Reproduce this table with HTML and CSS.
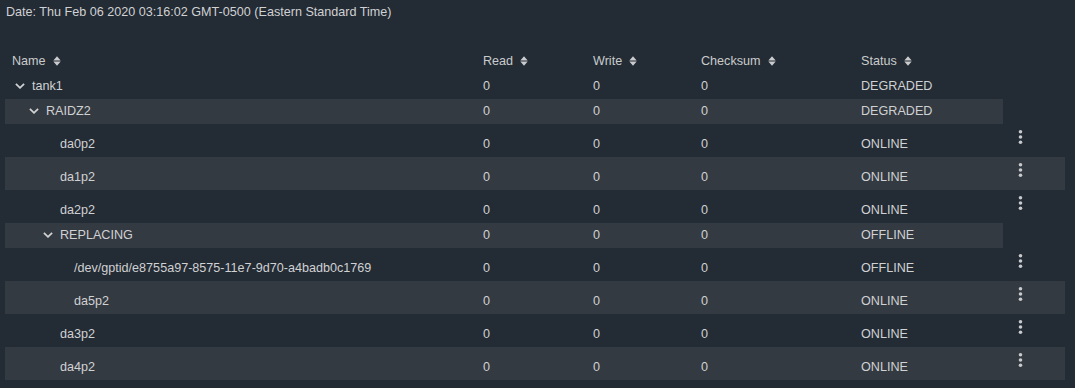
FILE: index.html
```html
<!DOCTYPE html>
<html lang="en">
<head>
<meta charset="utf-8">
<title>Pool Status</title>
<link rel="stylesheet" href="styles.css">
</head>
<body>
<div class="page">
  <div class="date">Date: Thu Feb 06 2020 03:16:02 GMT-0500 (Eastern Standard Time)</div>
  <div class="table">
    <div class="row head">
      <div class="cell"><span>Name</span><svg class="sort" width="8" height="10" viewBox="0 0 8 10"><path d="M0.3 4.4 L4 0.2 L7.7 4.4 Z M0.3 5.6 L4 9.8 L7.7 5.6 Z"/></svg></div>
      <div class="cell"><span>Read</span><svg class="sort" width="8" height="10" viewBox="0 0 8 10"><path d="M0.3 4.4 L4 0.2 L7.7 4.4 Z M0.3 5.6 L4 9.8 L7.7 5.6 Z"/></svg></div>
      <div class="cell"><span>Write</span><svg class="sort" width="8" height="10" viewBox="0 0 8 10"><path d="M0.3 4.4 L4 0.2 L7.7 4.4 Z M0.3 5.6 L4 9.8 L7.7 5.6 Z"/></svg></div>
      <div class="cell"><span>Checksum</span><svg class="sort" width="8" height="10" viewBox="0 0 8 10"><path d="M0.3 4.4 L4 0.2 L7.7 4.4 Z M0.3 5.6 L4 9.8 L7.7 5.6 Z"/></svg></div>
      <div class="cell"><span>Status</span><svg class="sort" width="8" height="10" viewBox="0 0 8 10"><path d="M0.3 4.4 L4 0.2 L7.7 4.4 Z M0.3 5.6 L4 9.8 L7.7 5.6 Z"/></svg></div>
    </div>

    <div class="row parent">
      <div class="cell name lvl-0"><span class="toggle"><svg width="10" height="6" viewBox="0 0 10 6"><path d="M0.9 0.9 L5 4.8 L9.1 0.9"/></svg></span>tank1</div>
      <div class="cell">0</div><div class="cell">0</div><div class="cell">0</div><div class="cell">DEGRADED</div>
    </div>

    <div class="row parent striped">
      <div class="cell name lvl-1"><span class="toggle"><svg width="10" height="6" viewBox="0 0 10 6"><path d="M0.9 0.9 L5 4.8 L9.1 0.9"/></svg></span>RAIDZ2</div>
      <div class="cell">0</div><div class="cell">0</div><div class="cell">0</div><div class="cell">DEGRADED</div>
    </div>

    <div class="row leaf">
      <div class="cell name lvl-2"><span class="toggle"></span>da0p2</div>
      <div class="cell">0</div><div class="cell">0</div><div class="cell">0</div><div class="cell">ONLINE</div>
      <div class="cell actions"><svg width="9" height="26" viewBox="0 0 9 26"><circle cx="4.5" cy="7.7" r="1.8"/><circle cx="4.5" cy="13" r="1.8"/><circle cx="4.5" cy="18.3" r="1.8"/></svg></div>
    </div>

    <div class="row leaf striped">
      <div class="cell name lvl-2"><span class="toggle"></span>da1p2</div>
      <div class="cell">0</div><div class="cell">0</div><div class="cell">0</div><div class="cell">ONLINE</div>
      <div class="cell actions"><svg width="9" height="26" viewBox="0 0 9 26"><circle cx="4.5" cy="7.7" r="1.8"/><circle cx="4.5" cy="13" r="1.8"/><circle cx="4.5" cy="18.3" r="1.8"/></svg></div>
    </div>

    <div class="row leaf">
      <div class="cell name lvl-2"><span class="toggle"></span>da2p2</div>
      <div class="cell">0</div><div class="cell">0</div><div class="cell">0</div><div class="cell">ONLINE</div>
      <div class="cell actions"><svg width="9" height="26" viewBox="0 0 9 26"><circle cx="4.5" cy="7.7" r="1.8"/><circle cx="4.5" cy="13" r="1.8"/><circle cx="4.5" cy="18.3" r="1.8"/></svg></div>
    </div>

    <div class="row parent striped">
      <div class="cell name lvl-2"><span class="toggle"><svg width="10" height="6" viewBox="0 0 10 6"><path d="M0.9 0.9 L5 4.8 L9.1 0.9"/></svg></span>REPLACING</div>
      <div class="cell">0</div><div class="cell">0</div><div class="cell">0</div><div class="cell">OFFLINE</div>
    </div>

    <div class="row leaf">
      <div class="cell name lvl-3"><span class="toggle"></span>/dev/gptid/e8755a97-8575-11e7-9d70-a4badb0c1769</div>
      <div class="cell">0</div><div class="cell">0</div><div class="cell">0</div><div class="cell">OFFLINE</div>
      <div class="cell actions"><svg width="9" height="26" viewBox="0 0 9 26"><circle cx="4.5" cy="7.7" r="1.8"/><circle cx="4.5" cy="13" r="1.8"/><circle cx="4.5" cy="18.3" r="1.8"/></svg></div>
    </div>

    <div class="row leaf striped">
      <div class="cell name lvl-3"><span class="toggle"></span>da5p2</div>
      <div class="cell">0</div><div class="cell">0</div><div class="cell">0</div><div class="cell">ONLINE</div>
      <div class="cell actions"><svg width="9" height="26" viewBox="0 0 9 26"><circle cx="4.5" cy="7.7" r="1.8"/><circle cx="4.5" cy="13" r="1.8"/><circle cx="4.5" cy="18.3" r="1.8"/></svg></div>
    </div>

    <div class="row leaf">
      <div class="cell name lvl-2"><span class="toggle"></span>da3p2</div>
      <div class="cell">0</div><div class="cell">0</div><div class="cell">0</div><div class="cell">ONLINE</div>
      <div class="cell actions"><svg width="9" height="26" viewBox="0 0 9 26"><circle cx="4.5" cy="7.7" r="1.8"/><circle cx="4.5" cy="13" r="1.8"/><circle cx="4.5" cy="18.3" r="1.8"/></svg></div>
    </div>

    <div class="row leaf striped">
      <div class="cell name lvl-2"><span class="toggle"></span>da4p2</div>
      <div class="cell">0</div><div class="cell">0</div><div class="cell">0</div><div class="cell">ONLINE</div>
      <div class="cell actions"><svg width="9" height="26" viewBox="0 0 9 26"><circle cx="4.5" cy="7.7" r="1.8"/><circle cx="4.5" cy="13" r="1.8"/><circle cx="4.5" cy="18.3" r="1.8"/></svg></div>
    </div>
  </div>
</div>
</body>
</html>
```

FILE: styles.css
```css
html, body {
  margin: 0;
  padding: 0;
  background: #232b34;
}

body {
  font-family: "Liberation Sans", Arial, sans-serif;
  font-size: 12.6px;
  color: #d0d1d3;
}

.page {
  display: flex;
  flex-direction: column;
}

.date {
  padding: 1px 0 0 6px;
  line-height: 22px;
  white-space: nowrap;
}

.table {
  margin-top: 26px;
  margin-left: 5px;
  display: flex;
  flex-direction: column;
}

.row {
  display: grid;
  grid-template-columns: 471px 110px 108px 160px 149px;
  width: fit-content;
}

.row.leaf {
  grid-template-columns: 471px 110px 108px 160px 149px 62px;
}

.row.striped {
  background: #343a41;
}

.cell {
  display: flex;
  align-items: center;
  padding: 1px 0 2px 7px;
  line-height: 22px;
  white-space: nowrap;
}

.row.leaf .cell {
  padding-top: 9px;
}

.row.head .cell {
  color: #c9cbcd;
}

.sort {
  margin-left: 7px;
  fill: #c9cbcd;
}

.name.lvl-1 { padding-left: 21px; }
.name.lvl-2 { padding-left: 35px; }
.name.lvl-3 { padding-left: 49px; }

.toggle {
  display: flex;
  align-items: center;
  width: 20px;
  height: 22px;
  flex: none;
}

.toggle svg {
  margin-left: 3px;
  fill: none;
  stroke: #d0d1d3;
  stroke-width: 1.8;
}

.row.leaf .cell.actions {
  padding: 0 0 0 13px;
  align-items: flex-start;
}

.actions svg {
  fill: #c8cacc;
}
```
